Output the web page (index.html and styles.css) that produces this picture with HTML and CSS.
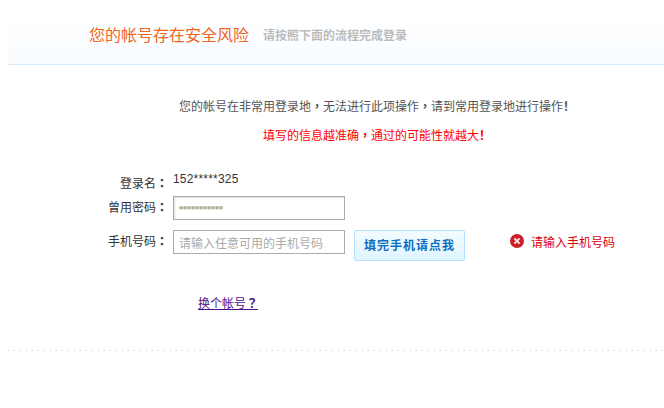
FILE: index.html
```html
<!DOCTYPE html>
<html lang="zh-CN">
<head>
    <meta charset="UTF-8">
    <title>帐号安全</title>
    <link rel="stylesheet" href="styles.css">
</head>
<body>
    <div class="header">
        <h1>您的帐号存在安全风险</h1>
        <span class="sub-title">请按照下面的流程完成登录</span>
    </div>

    <p class="notice">您的帐号在非常用登录地<span lang="zh-TW">，</span>无法进行此项操作<span lang="zh-TW">，</span>请到常用登录地进行操作<span class="mark">！</span></p>
    <p class="tip">填写的信息越准确<span lang="zh-TW">，</span>通过的可能性就越大<span class="mark">！</span></p>

    <div class="form">
        <div class="row row-name">
            <label>登录名<span lang="zh-TW">：</span></label>
            <span class="account">152*****325</span>
        </div>
        <div class="row row-pass">
            <label for="password">曾用密码<span lang="zh-TW">：</span></label>
            <input type="text" id="password" class="field field-pass" value="●●●●●●●●●●●">
        </div>
        <div class="row row-phone">
            <label for="phone">手机号码<span lang="zh-TW">：</span></label>
            <input type="text" id="phone" class="field" placeholder="请输入任意可用的手机号码">
            <button class="submit-btn">填完手机请点我</button>
            <div class="error">
                <svg class="error-icon" viewBox="0 0 14 14" xmlns="http://www.w3.org/2000/svg">
                    <circle cx="7" cy="7" r="7" fill="#cc1f27"></circle>
                    <path d="M4.4 4.4l5.2 5.2M9.6 4.4l-5.2 5.2" stroke="#f6e6e6" stroke-width="2"></path>
                </svg>
                <span>请输入手机号码</span>
            </div>
        </div>
    </div>

    <a class="change-link" href="#">换个帐号<span lang="zh-TW">？</span></a>
    <div class="dots"></div>
</body>
</html>
```

FILE: styles.css
```css
body {
    margin: 0;
    padding: 14px 0 0 8px;
    font-family: "Noto Sans CJK SC", "Liberation Sans", sans-serif;
    font-size: 12px;
    color: #333;
    background-color: #fff;
}
[lang="zh-TW"] {
    font-family: "Noto Sans CJK TC", sans-serif;
    font-weight: bold;
}
.mark {
    font-weight: bold;
}
.header {
    display: flex;
    align-items: center;
    height: 40px;
    padding: 0 0 10px 81px;
    border-bottom: 1px solid #d9edff;
    background: linear-gradient(#fff, #f8fcff);
}
h1 {
    margin: 0;
    font-size: 16px;
    font-weight: normal;
    line-height: 40px;
    color: #f0651f;
}
.sub-title {
    margin-left: 14px;
    font-weight: bold;
    color: #bbb;
}
.notice {
    margin: 32px 0 0 171px;
    line-height: 18px;
    color: #555;
}
.tip {
    margin: 11px 0 0 255px;
    line-height: 18px;
    color: #f00;
}
.form {
    margin-top: 30px;
}
.row {
    display: flex;
}
.row label {
    width: 160px;
    flex: none;
    text-align: right;
    line-height: 18px;
}
.row-name {
    height: 22px;
}
.account {
    margin-left: 5px;
    margin-top: -3px;
    font-family: "Liberation Sans", sans-serif;
    font-size: 12px;
    letter-spacing: 0.2px;
    line-height: 16px;
}
.row-pass {
    height: 34px;
}
.row-pass label,
.row-phone label {
    margin-top: 2px;
}
.field {
    width: 172px;
    height: 24px;
    margin: 0 0 0 5px;
    padding: 0 5px;
    box-sizing: border-box;
    border: 1px solid #aaa;
    font-family: inherit;
    font-size: 12px;
    color: #999;
}
.field::placeholder {
    color: #aaa;
    opacity: 1;
}
.field-pass {
    font-size: 4px;
    letter-spacing: 0;
    color: #b5b58f;
    box-shadow: inset 1px 1px 2px #ddd;
}
.submit-btn {
    width: 111px;
    height: 31px;
    margin-left: 9px;
    padding: 0 0 2px;
    border: 1px solid #b5e0fb;
    border-radius: 2px;
    background: linear-gradient(#f4fbff, #dff4ff);
    font-family: inherit;
    font-size: 12px;
    font-weight: bold;
    letter-spacing: 1px;
    color: #0a6fc2;
}
.error {
    display: flex;
    align-items: center;
    gap: 7px;
    height: 24px;
    margin-left: 45px;
    margin-top: -1px;
    color: #d8000f;
}
.error-icon {
    width: 14px;
    height: 14px;
}
.change-link {
    display: inline-block;
    margin: 33px 0 0 190px;
    line-height: 18px;
    color: #4b0f8c;
}
.dots {
    height: 1px;
    margin-top: 38px;
    background: repeating-linear-gradient(to right, #ccc 0, #ccc 1px, transparent 1px, transparent 6px);
}
```
